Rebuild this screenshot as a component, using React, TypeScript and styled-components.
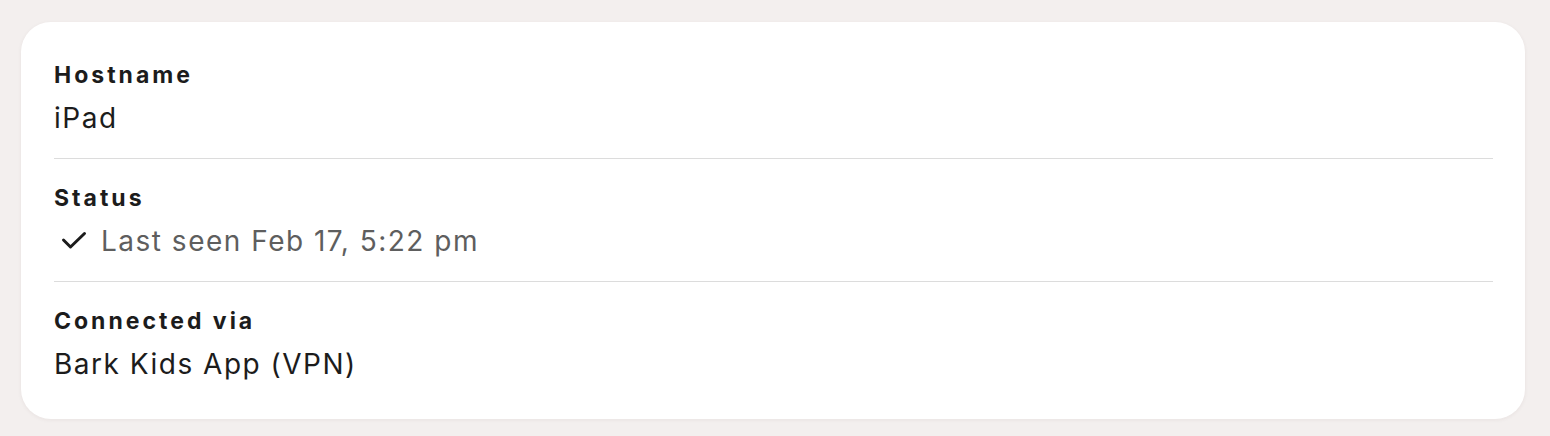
import styled, { createGlobalStyle } from "styled-components";

const GlobalStyle = createGlobalStyle`
  html, body {
    margin: 0;
    padding: 0;
    background: #f3efee;
  }
  body {
    font-family: Inter, "Noto Sans", "Liberation Sans", sans-serif;
    -webkit-font-smoothing: antialiased;
  }
`;

const Page = styled.div`
  padding: 22px 25px 18px 21px;
`;

const Card = styled.section`
  background: #ffffff;
  border-radius: 30px;
  box-shadow: 0px 1px 4px rgba(60, 40, 30, 0.06);
  padding: 14px 32px 15px 33px;
`;

const Row = styled.div`
  padding: 24px 0 20px;

  & + & {
    border-top: 1px solid #dcdcdc;
  }
`;

const Label = styled.div`
  font-size: 23px;
  line-height: 30px;
  font-weight: 700;
  letter-spacing: 3px;
  color: #1c1c1c;
`;

const Value = styled.div<{ $muted?: boolean }>`
  display: flex;
  align-items: center;
  margin-top: 8px;
  font-size: 28px;
  line-height: 40px;
  font-weight: 400;
  letter-spacing: 1.5px;
  color: ${({ $muted }) => ($muted ? "#5e5e5e" : "#1c1c1c")};
`;

const CheckIcon = styled.svg`
  flex: none;
  width: 26px;
  height: 20px;
  margin: 0 14px 0 7px;
`;

interface DetailRowProps {
  label: string;
  value: string;
  muted?: boolean;
  checked?: boolean;
}

function DetailRow({ label, value, muted, checked }: DetailRowProps) {
  return (
    <Row>
      <Label>{label}</Label>
      <Value $muted={muted}>
        {checked && (
          <CheckIcon viewBox="0 0 26 20" fill="none">
            <path
              d="M2.5 9 L9.5 16 L23.5 2.5"
              stroke="#1c1c1c"
              strokeWidth="3"
              strokeLinecap="round"
              strokeLinejoin="round"
            />
          </CheckIcon>
        )}
        {value}
      </Value>
    </Row>
  );
}

export default function App() {
  return (
    <Page>
      <GlobalStyle />
      <Card>
        <DetailRow label="Hostname" value="iPad" />
        <DetailRow label="Status" value="Last seen Feb 17, 5:22 pm" muted checked />
        <DetailRow label="Connected via" value="Bark Kids App (VPN)" />
      </Card>
    </Page>
  );
}
